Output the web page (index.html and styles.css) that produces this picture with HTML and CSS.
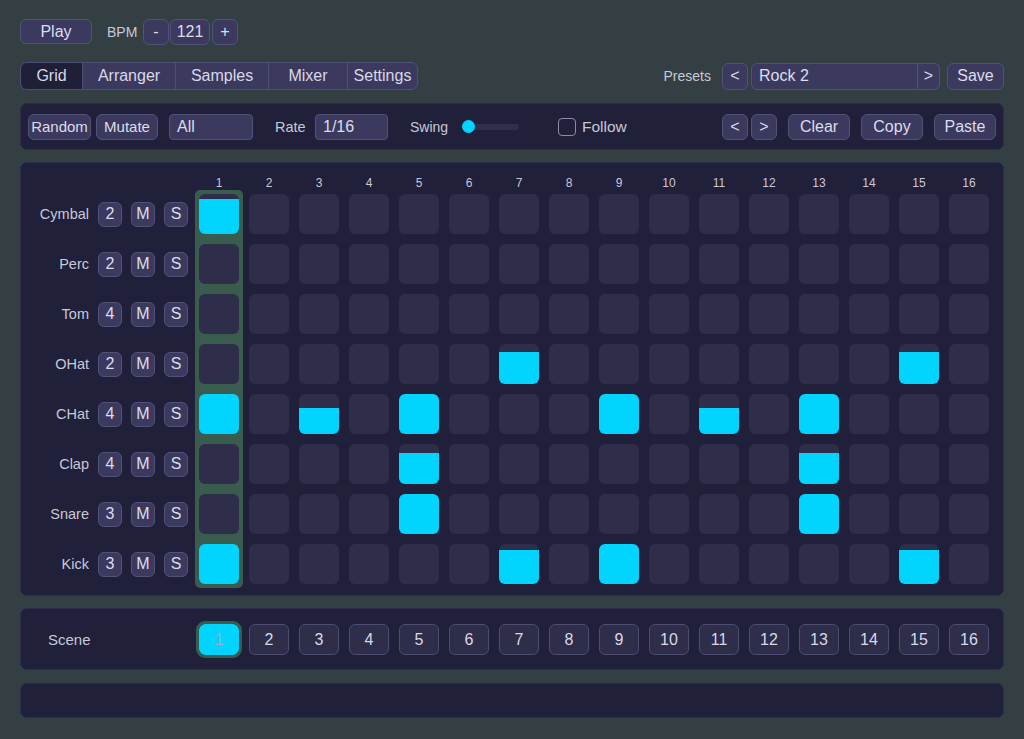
FILE: index.html
```html
<!DOCTYPE html>
<html>
<head>
<meta charset="utf-8">
<link rel="stylesheet" href="styles.css">
</head>
<body>
<div class="app">
  <div class="topbar">
    <button class="btn play">Play</button>
    <span class="bpm-label">BPM</span>
    <button class="btn step">-</button>
    <button class="btn bpm-val">121</button>
    <button class="btn step">+</button>
  </div>

  <div class="tabrow">
    <div class="tabs">
      <div class="tab active t-grid">Grid</div>
      <div class="tab t-arr">Arranger</div>
      <div class="tab t-sam">Samples</div>
      <div class="tab t-mix">Mixer</div>
      <div class="tab t-set">Settings</div>
    </div>
    <div class="presets">
      <span class="presets-label">Presets</span>
      <button class="btn pbtn">&lt;</button>
      <div class="preset-name">Rock 2</div>
      <button class="btn pnext">&gt;</button>
      <button class="btn save">Save</button>
    </div>
  </div>

  <div class="panel toolbar">
    <button class="btn tb random">Random</button>
    <button class="btn tb mutate">Mutate</button>
    <div class="select all">All</div>
    <span class="lbl rate-lbl">Rate</span>
    <div class="select rate">1/16</div>
    <span class="lbl swing-lbl">Swing</span>
    <div class="slider"><span class="thumb"></span><span class="track"></span></div>
    <span class="checkbox"></span>
    <span class="lbl follow">Follow</span>
    <div class="tb-right">
      <button class="btn tb nav">&lt;</button>
      <button class="btn tb nav nav2">&gt;</button>
      <button class="btn tb act">Clear</button>
      <button class="btn tb act">Copy</button>
      <button class="btn tb act">Paste</button>
    </div>
  </div>

  <div class="panel gridpanel">
    <div class="gbody">
      <div class="labels">
        <div class="hdr"></div>
        <div class="cells">
          <div class="trk"><span class="tname">Cymbal</span><span class="mini">2</span><span class="mini">M</span><span class="mini">S</span></div>
          <div class="trk"><span class="tname">Perc</span><span class="mini">2</span><span class="mini">M</span><span class="mini">S</span></div>
          <div class="trk"><span class="tname">Tom</span><span class="mini">4</span><span class="mini">M</span><span class="mini">S</span></div>
          <div class="trk"><span class="tname">OHat</span><span class="mini">2</span><span class="mini">M</span><span class="mini">S</span></div>
          <div class="trk"><span class="tname">CHat</span><span class="mini">4</span><span class="mini">M</span><span class="mini">S</span></div>
          <div class="trk"><span class="tname">Clap</span><span class="mini">4</span><span class="mini">M</span><span class="mini">S</span></div>
          <div class="trk"><span class="tname">Snare</span><span class="mini">3</span><span class="mini">M</span><span class="mini">S</span></div>
          <div class="trk"><span class="tname">Kick</span><span class="mini">3</span><span class="mini">M</span><span class="mini">S</span></div>
        </div>
      </div>

      <div class="col">
        <div class="hdr">1</div>
        <div class="cells playhead">
          <div class="cell"><div class="fill" style="height:87%"></div></div>
          <div class="cell"></div>
          <div class="cell"></div>
          <div class="cell"></div>
          <div class="cell"><div class="fill" style="height:100%"></div></div>
          <div class="cell"></div>
          <div class="cell"></div>
          <div class="cell"><div class="fill" style="height:100%"></div></div>
        </div>
      </div>
      <div class="col">
        <div class="hdr">2</div>
        <div class="cells">
          <div class="cell"></div><div class="cell"></div><div class="cell"></div><div class="cell"></div>
          <div class="cell"></div><div class="cell"></div><div class="cell"></div><div class="cell"></div>
        </div>
      </div>
      <div class="col">
        <div class="hdr">3</div>
        <div class="cells">
          <div class="cell"></div><div class="cell"></div><div class="cell"></div><div class="cell"></div>
          <div class="cell"><div class="fill" style="height:66%"></div></div>
          <div class="cell"></div><div class="cell"></div><div class="cell"></div>
        </div>
      </div>
      <div class="col">
        <div class="hdr">4</div>
        <div class="cells">
          <div class="cell"></div><div class="cell"></div><div class="cell"></div><div class="cell"></div>
          <div class="cell"></div><div class="cell"></div><div class="cell"></div><div class="cell"></div>
        </div>
      </div>
      <div class="col">
        <div class="hdr">5</div>
        <div class="cells">
          <div class="cell"></div><div class="cell"></div><div class="cell"></div><div class="cell"></div>
          <div class="cell"><div class="fill" style="height:100%"></div></div>
          <div class="cell"><div class="fill" style="height:78%"></div></div>
          <div class="cell"><div class="fill" style="height:100%"></div></div>
          <div class="cell"></div>
        </div>
      </div>
      <div class="col">
        <div class="hdr">6</div>
        <div class="cells">
          <div class="cell"></div><div class="cell"></div><div class="cell"></div><div class="cell"></div>
          <div class="cell"></div><div class="cell"></div><div class="cell"></div><div class="cell"></div>
        </div>
      </div>
      <div class="col">
        <div class="hdr">7</div>
        <div class="cells">
          <div class="cell"></div><div class="cell"></div><div class="cell"></div>
          <div class="cell"><div class="fill" style="height:80%"></div></div>
          <div class="cell"></div><div class="cell"></div><div class="cell"></div>
          <div class="cell"><div class="fill" style="height:86%"></div></div>
        </div>
      </div>
      <div class="col">
        <div class="hdr">8</div>
        <div class="cells">
          <div class="cell"></div><div class="cell"></div><div class="cell"></div><div class="cell"></div>
          <div class="cell"></div><div class="cell"></div><div class="cell"></div><div class="cell"></div>
        </div>
      </div>
      <div class="col">
        <div class="hdr">9</div>
        <div class="cells">
          <div class="cell"></div><div class="cell"></div><div class="cell"></div><div class="cell"></div>
          <div class="cell"><div class="fill" style="height:100%"></div></div>
          <div class="cell"></div><div class="cell"></div>
          <div class="cell"><div class="fill" style="height:100%"></div></div>
        </div>
      </div>
      <div class="col">
        <div class="hdr">10</div>
        <div class="cells">
          <div class="cell"></div><div class="cell"></div><div class="cell"></div><div class="cell"></div>
          <div class="cell"></div><div class="cell"></div><div class="cell"></div><div class="cell"></div>
        </div>
      </div>
      <div class="col">
        <div class="hdr">11</div>
        <div class="cells">
          <div class="cell"></div><div class="cell"></div><div class="cell"></div><div class="cell"></div>
          <div class="cell"><div class="fill" style="height:66%"></div></div>
          <div class="cell"></div><div class="cell"></div><div class="cell"></div>
        </div>
      </div>
      <div class="col">
        <div class="hdr">12</div>
        <div class="cells">
          <div class="cell"></div><div class="cell"></div><div class="cell"></div><div class="cell"></div>
          <div class="cell"></div><div class="cell"></div><div class="cell"></div><div class="cell"></div>
        </div>
      </div>
      <div class="col">
        <div class="hdr">13</div>
        <div class="cells">
          <div class="cell"></div><div class="cell"></div><div class="cell"></div><div class="cell"></div>
          <div class="cell"><div class="fill" style="height:100%"></div></div>
          <div class="cell"><div class="fill" style="height:78%"></div></div>
          <div class="cell"><div class="fill" style="height:100%"></div></div>
          <div class="cell"></div>
        </div>
      </div>
      <div class="col">
        <div class="hdr">14</div>
        <div class="cells">
          <div class="cell"></div><div class="cell"></div><div class="cell"></div><div class="cell"></div>
          <div class="cell"></div><div class="cell"></div><div class="cell"></div><div class="cell"></div>
        </div>
      </div>
      <div class="col">
        <div class="hdr">15</div>
        <div class="cells">
          <div class="cell"></div><div class="cell"></div><div class="cell"></div>
          <div class="cell"><div class="fill" style="height:80%"></div></div>
          <div class="cell"></div><div class="cell"></div><div class="cell"></div>
          <div class="cell"><div class="fill" style="height:86%"></div></div>
        </div>
      </div>
      <div class="col">
        <div class="hdr">16</div>
        <div class="cells">
          <div class="cell"></div><div class="cell"></div><div class="cell"></div><div class="cell"></div>
          <div class="cell"></div><div class="cell"></div><div class="cell"></div><div class="cell"></div>
        </div>
      </div>
    </div>
  </div>

  <div class="panel scenepanel">
    <div class="scene-label">Scene</div>
    <button class="scene active">1</button>
    <button class="scene">2</button>
    <button class="scene">3</button>
    <button class="scene">4</button>
    <button class="scene">5</button>
    <button class="scene">6</button>
    <button class="scene">7</button>
    <button class="scene">8</button>
    <button class="scene">9</button>
    <button class="scene">10</button>
    <button class="scene">11</button>
    <button class="scene">12</button>
    <button class="scene">13</button>
    <button class="scene">14</button>
    <button class="scene">15</button>
    <button class="scene">16</button>
  </div>

  <div class="panel bottompanel"></div>
</div>
</body>
</html>
```

FILE: styles.css
```css
* { box-sizing: border-box; }

body {
  margin: 0;
  background: #343f44;
  font-family: "Liberation Sans", Arial, sans-serif;
  color: #d8d8e8;
}

.app {
  width: 1024px;
  padding: 19px 20px 0 20px;
}

.btn {
  background: #3b3a5e;
  border: 1px solid #525178;
  border-radius: 6px;
  color: #dcdcec;
  font-family: inherit;
  font-size: 16px;
  padding: 0;
  margin: 0;
  display: flex;
  align-items: center;
  justify-content: center;
  white-space: nowrap;
}

/* top bar */
.topbar {
  display: flex;
  align-items: center;
  height: 25px;
}
.play { width: 72px; height: 25px; }
.bpm-label { margin-left: 15px; font-size: 14px; color: #c8c8d8; width: 30px; white-space: nowrap; }
.step { width: 26px; height: 26px; margin-left: 6px; }
.bpm-val { width: 40px; height: 26px; margin-left: 1px; }
.bpm-val + .step { margin-left: 2px; }

/* tabs row */
.tabrow {
  display: flex;
  justify-content: space-between;
  align-items: center;
  margin-top: 18px;
  height: 28px;
}
.tabs {
  display: flex;
  height: 28px;
  border: 1px solid #4f4e75;
  border-radius: 7px;
  background: #3b3a5e;
  overflow: hidden;
}
.tab {
  display: flex;
  align-items: center;
  justify-content: center;
  font-size: 16px;
  color: #d8d8e8;
  border-left: 1px solid #4f4e75;
}
.tab.active { background: #1f1f38; border-left: none; }
.t-grid { width: 61px; }
.t-arr { width: 93px; }
.t-sam { width: 93px; }
.t-mix { width: 79px; }
.t-set { width: 70px; }

.presets { display: flex; align-items: center; height: 28px; }
.presets-label { font-size: 14px; color: #c8c8d8; margin-right: 11px; }
.pbtn { width: 26px; height: 27px; }
.preset-name {
  width: 167px;
  height: 27px;
  margin-left: 3px;
  background: #3b3a5e;
  border: 1px solid #525178;
  border-radius: 6px 0 0 6px;
  font-size: 16px;
  color: #dcdcec;
  display: flex;
  align-items: center;
  padding-left: 7px;
}
.pnext { width: 22px; height: 27px; border-radius: 0 6px 6px 0; border-left: none; }
.save { width: 57px; height: 27px; margin-left: 7px; }

/* panels */
.panel {
  background: #20203a;
  border: 1px solid #2c2c4a;
  border-radius: 7px;
}

.toolbar {
  margin-top: 13px;
  height: 47px;
  padding: 9px 7px;
  display: flex;
  align-items: center;
}
.tb { height: 26px; font-size: 15px; }
.random { width: 63px; }
.mutate { width: 62px; margin-left: 5px; }
.select {
  height: 26px;
  background: #3b3a5e;
  border: 1px solid #525178;
  border-radius: 4px;
  font-size: 16px;
  color: #dcdcec;
  display: flex;
  align-items: center;
  padding-left: 7px;
}
.all { width: 84px; margin-left: 11px; }
.lbl { font-size: 15px; color: #c8c8d8; white-space: nowrap; }
.rate-lbl { margin-left: 22px; width: 30px; font-size: 14.5px; }
.rate { width: 73px; margin-left: 10px; }
.swing-lbl { margin-left: 22px; width: 37px; font-size: 14px; }
.slider {
  display: flex;
  align-items: center;
  width: 57px;
  height: 14px;
  margin-left: 15px;
}
.thumb {
  width: 13px;
  height: 13px;
  border-radius: 50%;
  background: #00d4ff;
  position: relative;
  z-index: 1;
  flex: none;
}
.track {
  flex: 1;
  height: 6px;
  margin-left: -6px;
  border-radius: 3px;
  background: #2f2e4c;
}
.checkbox {
  width: 18px;
  height: 18px;
  margin-left: 39px;
  border: 1.5px solid #8c8ca8;
  border-radius: 4px;
}
.follow { margin-left: 6px; font-size: 15.5px; }
.tb-right { margin-left: auto; display: flex; align-items: center; }
.nav { width: 26px; font-size: 16px; }
.nav2 { margin-left: 3px; }
.act { width: 62px; margin-left: 11px; font-size: 16px; }

/* grid */
.gridpanel {
  margin-top: 12px;
  height: 434px;
  padding: 13px 14px 7px 0;
}
.gbody { display: flex; gap: 10px; }
.labels { width: 168px; }
.col { width: 40px; }
.hdr {
  height: 14px;
  line-height: 14px;
  font-size: 12px;
  text-align: center;
  color: #c8c8d8;
}
.cells {
  display: flex;
  flex-direction: column;
  gap: 10px;
  padding: 4px 0;
}
.cells.playhead {
  background: #3a5c4f;
  border-radius: 5px;
  padding: 4px;
  margin: 0 -4px;
}
.cell {
  width: 40px;
  height: 40px;
  border-radius: 6px;
  background: #2e2d4a;
  overflow: hidden;
  display: flex;
  flex-direction: column;
  justify-content: flex-end;
}
.fill { background: #00d4ff; width: 100%; }

.trk {
  height: 40px;
  display: flex;
  align-items: center;
  justify-content: flex-end;
  gap: 9px;
  padding-right: 1px;
}
.tname { font-size: 14.5px; color: #c8c8d8; }
.mini {
  width: 24px;
  height: 25px;
  border: 1px solid #525178;
  background: #3b3a5e;
  border-radius: 6px;
  display: flex;
  align-items: center;
  justify-content: center;
  font-size: 16px;
  color: #dcdcec;
}

/* scenes */
.scenepanel {
  margin-top: 12px;
  height: 62px;
  padding: 15px 14px 14px 0;
  display: flex;
  align-items: center;
  gap: 10px;
}
.scene-label {
  width: 168px;
  padding-left: 27px;
  font-size: 15px;
  color: #c8c8d8;
}
.scene {
  width: 40px;
  height: 31px;
  padding: 0;
  border: 1px solid #4c4b70;
  background: #2e2d4a;
  border-radius: 6px;
  font-family: inherit;
  font-size: 16px;
  color: #d8d8e8;
}
.scene.active {
  background: #00d4ff;
  border-color: #00d4ff;
  color: #a8a4c8;
  outline: 3px solid #3a5c4f;
}

.bottompanel {
  margin-top: 13px;
  height: 35px;
}
```
